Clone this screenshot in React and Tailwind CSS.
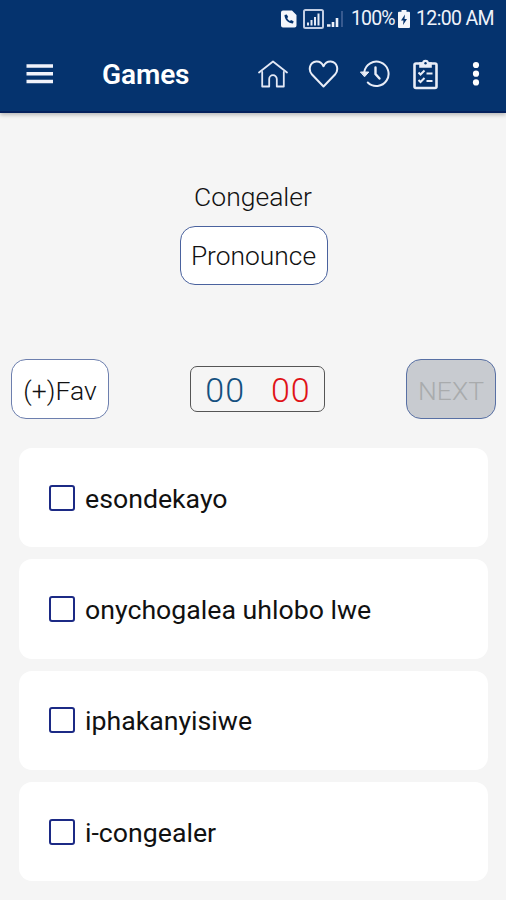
import { useState } from 'react';

const answers = [
  { id: 1, text: 'esondekayo' },
  { id: 2, text: 'onychogalea uhlobo lwe' },
  { id: 3, text: 'iphakanyisiwe' },
  { id: 4, text: 'i-congealer' },
];

function StatusBar() {
  return (
    <div className="flex h-[37px] items-center justify-end pr-[12px] text-[19.5px] leading-[37px] text-[#eef2fa]">
      <svg className="mr-[6px]" width="16" height="18" viewBox="0 0 16 18">
        <path d="M2 0.5h9l4.5 4.5v10.5a2 2 0 0 1-2 2H2a2 2 0 0 1-2-2v-13a2 2 0 0 1 2-2z" fill="#f4f6fb" />
        <path d="M3.500 5c0 4.500 4 8.500 8.500 8.500l.6-2.300-2.600-1.200-1 1c-1.300-.6-2.300-1.600-2.800-2.900l1-1L5.800 4.400z" fill="#05336e" />
      </svg>
      <svg className="mr-[3px]" width="21" height="20" viewBox="0 0 21 20" fill="none">
        <rect x="1" y="1" width="19" height="18" rx="1.5" stroke="#c3cee3" strokeWidth="2" />
        <path d="M5 16.500v-3M8.500 16.500v-5.500M12 16.500v-8.500M15.500 16.500v-12" stroke="#e6ebf5" strokeWidth="2" />
      </svg>
      <svg className="mr-[7px]" width="17" height="18" viewBox="0 0 17 18" fill="none">
        <path d="M0 15.500h3.500M6 17v-5M10 17v-9" stroke="#eef2fa" strokeWidth="2.6" />
        <path d="M15 17v-16" stroke="#3f5f94" strokeWidth="1.8" />
      </svg>
      <span className="w-[44px] tracking-[-0.9px]">100%</span>
      <svg className="mr-[6px] ml-[3px]" width="12" height="18" viewBox="0 0 12 18">
        <path d="M3.500 0h5v1.800H11a1 1 0 0 1 1 1V17a1 1 0 0 1-1 1H1a1 1 0 0 1-1-1V2.800a1 1 0 0 1 1-1h2.500z" fill="#f4f6fb" />
        <path d="M7 4.500L3 10.500h2.500L5 15l4-6H6.500z" fill="#05336e" />
      </svg>
      <span className="tracking-[-0.65px]">12:00 AM</span>
    </div>
  );
}

function Toolbar() {
  return (
    <div className="flex h-[74px] items-center pr-[26px] pl-[26px] text-white">
      <button aria-label="Menu">
        <svg width="27" height="20" viewBox="0 0 27 20" stroke="#f1f3fb" strokeWidth="3.4">
          <path d="M0.500 2h26.500M0.500 9.700h26.500M0.500 17.500h26.500" />
        </svg>
      </button>
      <h1 className="ml-[49px] pt-[2px] text-[28px] leading-[30px] font-semibold tracking-[-0.1px]">Games</h1>
      <div className="ml-auto flex items-center">
        <button aria-label="Home" className="mr-[19px]">
          <svg width="32" height="30" viewBox="0 0 32 30" fill="none" stroke="#e3e8f5" strokeWidth="1.8" strokeLinejoin="round" strokeLinecap="round">
            <path d="M2 13.500L16 2.500l14 11" />
            <path d="M5.200 13v14.500h7v-7.500a3.800 3.800 0 0 1 7.600 0v7.500h7V13" />
          </svg>
        </button>
        <button aria-label="Favorites" className="mr-[21px]">
          <svg width="31" height="30" viewBox="0 0 31 30" fill="none" stroke="#e9edf7" strokeWidth="2" strokeLinejoin="round">
            <path d="M15.500 27.500L4 15.500C0 11 1.500 3 8.300 2.500c3.500-.2 5.800 1.800 7.200 4.700 1.400-2.900 3.700-4.900 7.200-4.700C29.500 3 31 11 27 15.500z" />
          </svg>
        </button>
        <button aria-label="History" className="mr-[23px]">
          <svg width="30" height="30" viewBox="0 0 30 30" fill="none" stroke="#e9edf7" strokeWidth="2" strokeLinecap="round">
            <path d="M4.300 13a12.200 12.200 0 1 1 3.500 10.500" />
            <path d="M15.500 8.500v6.500l4 4.500" strokeWidth="2.4" />
            <path d="M0.800 13h8l-4 4.500z" fill="#e9edf7" strokeWidth="1" />
          </svg>
        </button>
        <button aria-label="Word list" className="mr-[34px]">
          <svg width="25" height="31" viewBox="0 0 25 31" fill="none" stroke="#e9edf7" strokeWidth="2">
            <rect x="1.5" y="4.5" width="22" height="24.500" rx="1.5" strokeWidth="2.6" />
            <path d="M7 8V4h3a2.500 2.500 0 0 1 5 0h3v4z" fill="#e9edf7" strokeWidth="1.6" />
            <circle cx="12.500" cy="4.200" r="1.2" fill="#05336e" stroke="none" />
            <path d="M5.500 13.500l2 2 4-4M5.500 21l2 2 4-4M13.500 14.500h6M13.500 22h6" strokeWidth="2" />
          </svg>
        </button>
        <button aria-label="More">
          <svg width="8" height="26" viewBox="0 0 8 26" fill="#ffffff">
            <circle cx="4" cy="4" r="3.1" />
            <circle cx="4" cy="12.7" r="3.1" />
            <circle cx="4" cy="21.4" r="3.1" />
          </svg>
        </button>
      </div>
    </div>
  );
}

export default function App() {
  const [selected, setSelected] = useState(null);

  return (
    <div className="h-[900px] w-[506px] overflow-hidden bg-[#f5f5f5] font-['Roboto',sans-serif] text-[#111111]">
      <header className="h-[113px] border-b-2 border-[#03205c] bg-[#05336e] shadow-[0_2px_4px_rgba(0,0,0,0.25)]">
        <StatusBar />
        <Toolbar />
      </header>

      <main>
        {/* Word */}
        <section className="flex flex-col items-center pt-[68px]">
          <p className="text-[26.5px] leading-[32px] font-light">Congealer</p>
          <button className="mt-[13px] ml-[1px] h-[59px] w-[148px] rounded-[15px] border border-[#4a629e] bg-white pt-[2px] text-[26.4px] font-light">
            Pronounce
          </button>
        </section>

        {/* Score row */}
        <section className="mt-[74px] flex items-center justify-between pr-[10px] pl-[11px]">
          <button className="h-[60px] w-[98px] rounded-[15px] border-[1.5px] border-[#6d7fae] bg-white pt-[3px] text-[26.5px] font-light">
            (+)Fav
          </button>
          <div className="mr-[1px] flex h-[46px] w-[135px] items-center justify-center gap-[26px] rounded-[7px] border-[1.5px] border-[#555555] pt-[3px] pl-[2px] text-[34px] font-[350] tracking-[1px]">
            <span className="text-[#14507f]">00</span>
            <span className="text-[#e01217]">00</span>
          </div>
          <button className="h-[60px] w-[90px] rounded-[15px] border-[1.5px] border-[#5870a4] bg-[#c8cbd0] pt-[3px] text-[26.5px] font-light text-[#a9abad]" disabled>
            NEXT
          </button>
        </section>

        {/* Answers */}
        <section className="mt-[29px] flex flex-col gap-[12px] pr-[18px] pl-[19px]">
          {answers.map((answer) => (
            <button
              key={answer.id}
              onClick={() => setSelected(answer.id)}
              className="flex h-[99.3px] items-center rounded-[13px] bg-white pl-[30px] text-left"
            >
              <span
                className={`mr-[10px] h-[26px] w-[26px] rounded-[3px] border-2 border-[#1c2a85] ${
                  selected === answer.id ? 'bg-[#1c2a85]' : ''
                }`}
              ></span>
              <span className="pt-[2px] text-[26.7px] leading-[32px]">{answer.text}</span>
            </button>
          ))}
        </section>
      </main>
    </div>
  );
}
